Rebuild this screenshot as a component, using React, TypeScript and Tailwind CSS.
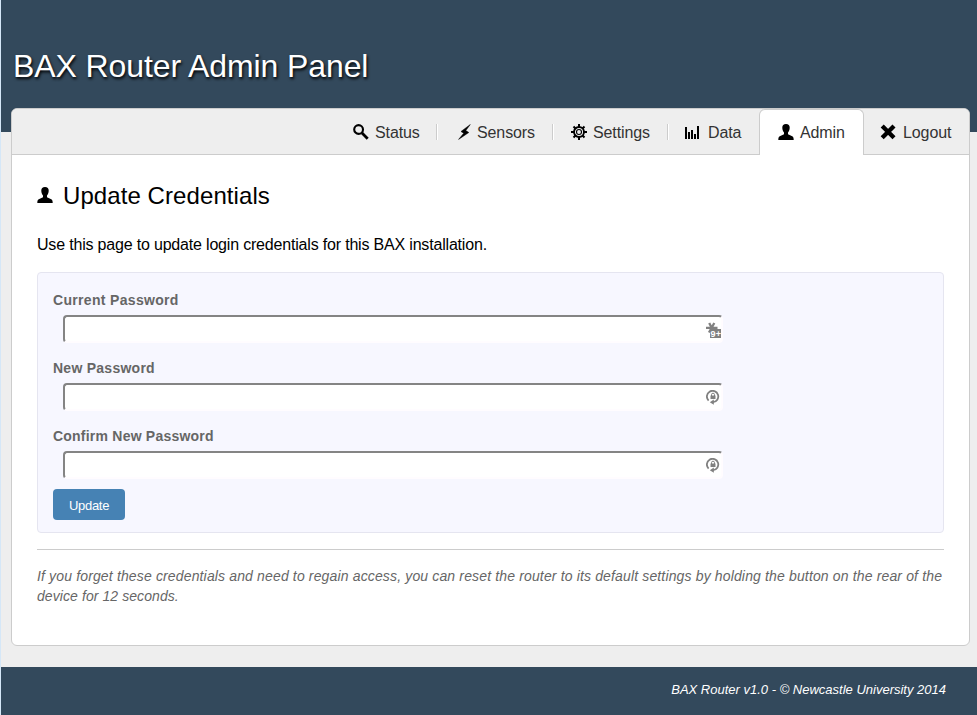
import type { ReactNode } from 'react';

const PersonIcon = () => (
  <svg width="16" height="16" viewBox="0 0 16 16" className="shrink-0">
    <path
      d="M8 0C5.500 0 4.300 1.300 4.300 3.500c0 2.300.6 3.600 1.700 4.900v1.900L2.300 11.900C.8 12.500.3 13.300.3 16h15.400c0-2.700-.5-3.500-2-4.100L10 10.300V8.400c1.100-1.300 1.700-2.600 1.700-4.900C11.700 1.300 10.500 0 8 0z"
      fill="#000"
    />
  </svg>
);

const SearchIcon = () => (
  <svg width="16" height="16" viewBox="0 0 16 16" className="shrink-0">
    <circle cx="5.600" cy="5.500" r="4.400" fill="none" stroke="#000" strokeWidth="2.100" />
    <path d="M9 9l5.700 5.700" stroke="#000" strokeWidth="2.800" />
  </svg>
);

const BoltIcon = () => (
  <svg width="13" height="16" viewBox="0 0 13 16" className="shrink-0">
    <path d="M12.300.5L3 7.500l2.700 1.700L.6 15.400 10.800 8.500 7.800 6.600z" fill="#000" stroke="#000" strokeWidth=".5" />
  </svg>
);

const GearIcon = () => (
  <svg width="16" height="16" viewBox="0 0 16 16" className="shrink-0" fill="none" stroke="#000">
    <path
      d="M8 0v3M8 13v3M0 8h3M13 8h3M2.500 2.500l2 2M11.500 11.500l2 2M13.500 2.500l-2 2M4.500 11.500l-2 2"
      strokeWidth="2"
    />
    <circle cx="8" cy="8" r="5" strokeWidth="1.900" />
    <circle cx="8" cy="8" r="2.500" strokeWidth="1.100" />
  </svg>
);

const BarsIcon = () => (
  <svg width="16" height="16" viewBox="0 0 16 16" className="shrink-0" shapeRendering="crispEdges">
    <path d="M0 3h2v12H0zM3 8h2v7H3zM6 6h2v9H6zM9 10h2v5H9zM12 2h2v13h-2z" fill="#000" />
  </svg>
);

const CrossIcon = () => (
  <svg width="16" height="16" viewBox="0 0 16 16" className="shrink-0">
    <path d="M2.200 2l11.800 11.800M14 2L2.200 13.800" stroke="#000" strokeWidth="4.300" />
  </svg>
);

const VaultIcon = () => (
  <svg width="16" height="17" viewBox="0 0 16 17">
    <path d="M0 5.800h11.500M3.200 1l5 9.500M8.300 1L3 10.500" stroke="#808080" strokeWidth="2.300" />
    <path d="M4 7h11v9H4z" fill="#808080" />
    <text x="4.600" y="14.500" fontSize="9" fontWeight="700" fill="#fff" fontFamily="Liberation Sans, sans-serif" textLength="10.400">
      9+
    </text>
  </svg>
);

const GenerateIcon = () => (
  <svg width="14" height="15" viewBox="0 0 14 15">
    <path d="M2.600 10.600A5.700 5.700 0 1 1 7 12.200" fill="none" stroke="#808080" strokeWidth="1.800" />
    <path d="M3.800 12.200L7.800 9.600v5.200z" fill="#808080" />
    <path d="M4.500 5.500h5v3.500h-5z" fill="#808080" />
    <path d="M5.500 6V4.700a1.500 1.500 0 0 1 3 0V6" fill="none" stroke="#808080" />
  </svg>
);

function NavItem({ icon, label, box, text }: { icon: ReactNode; label: string; box: string; text: string }) {
  return (
    <a className={`flex shrink-0 items-center ${box}`}>
      {icon}
      <span className={`pt-0.5 tracking-[-0.1px] whitespace-nowrap ${text}`}>{label}</span>
    </a>
  );
}

const Separator = () => <i className="h-4 w-0.5 shrink-0 border-r border-l border-r-white border-l-[#ccc]" />;

function PasswordField({ label, spacing, icon }: { label: string; spacing: string; icon: ReactNode }) {
  return (
    <div className="h-[68px]">
      <div className={`h-[25px] text-sm leading-[18px] font-bold text-[#666] ${spacing}`}>{label}</div>
      <div className="relative -mt-px ml-2.5 h-7 w-[660px] rounded border-2 border-t-[#848484] border-r-[#fffcff] border-b-[#fffcff] border-l-[#848484] bg-white">
        <input type="password" className="block h-6 w-[630px] bg-transparent outline-none" />
        {icon}
      </div>
    </div>
  );
}

export default function App() {
  return (
    <div className="flex h-[715px] w-[977px] flex-col overflow-hidden border-l border-[#d5e7f7] bg-[#eee] font-['Liberation_Sans',Arial,sans-serif] text-black">
      <header className="h-[132px] shrink-0 bg-[#33495c] pt-[46px] pl-3">
        <h1 className="text-[32px] leading-10 tracking-[-0.1px] whitespace-nowrap text-white [text-shadow:1px_2px_3px_#000]">
          BAX Router Admin Panel
        </h1>
      </header>

      <main className="relative -mt-6 ml-2.5 h-[538px] w-[959px] shrink-0 rounded-md border border-[#ccc] bg-white">
        <nav className="flex h-[46px] items-center justify-end rounded-t-[5px] border-b border-[#ccc] bg-[#eee] text-base text-[#333]">
          <NavItem icon={<SearchIcon />} label="Status" box="h-[45px] w-[83px]" text="ml-1.5" />
          <Separator />
          <NavItem icon={<BoltIcon />} label="Sensors" box="h-[45px] w-[114px] pl-5" text="ml-1.5" />
          <Separator />
          <NavItem icon={<GearIcon />} label="Settings" box="h-[45px] w-[113px] pl-[17px]" text="ml-1.5" />
          <Separator />
          <NavItem icon={<BarsIcon />} label="Data" box="h-[45px] w-[90px] pl-4" text="ml-[7px]" />
          <NavItem
            icon={<PersonIcon />}
            label="Admin"
            box="-mb-px h-[46px] w-[105px] rounded-t-md border-x border-t border-[#ccc] bg-white pb-[2px] pl-[18px]"
            text="ml-1.5"
          />
          <NavItem icon={<CrossIcon />} label="Logout" box="h-[45px] w-[105px] pl-4" text="ml-[7px]" />
        </nav>

        <section className="px-[25px] pt-[25px]">
          <h2 className="flex h-8 items-center text-2xl">
            <span className="-mt-0.5"><PersonIcon /></span>
            <span className="ml-2.5 tracking-[0.08px]">Update Credentials</span>
          </h2>
          <p className="mt-[21px] h-6 text-base leading-6 tracking-[-0.185px]">
            Use this page to update login credentials for this BAX installation.
          </p>

          <form className="mt-[15px] h-[261px] rounded border border-[#e5e5f0] bg-[#f7f7ff] px-[15px] pt-[18px]">
            <PasswordField
              label="Current Password"
              spacing="tracking-[0.32px]"
              icon={<span className="absolute top-[5px] right-[-1px]"><VaultIcon /></span>}
            />
            <PasswordField
              label="New Password"
              spacing="tracking-[0.26px]"
              icon={<span className="absolute top-[5px] right-[1px]"><GenerateIcon /></span>}
            />
            <PasswordField
              label="Confirm New Password"
              spacing="tracking-[0.22px]"
              icon={<span className="absolute top-[5px] right-[1px]"><GenerateIcon /></span>}
            />
            <button type="button" className="-mt-1.5 block h-[31px] w-[72px] rounded bg-[#4682b4] pt-0.5 text-[13px] leading-none tracking-[-0.3px] text-white">
              Update
            </button>
          </form>

          <hr className="mt-4 border-[#ccc]" />
          <p className="mt-4 text-sm leading-5 text-[#666] italic">
            <span className="block tracking-[0.147px] whitespace-nowrap">
              If you forget these credentials and need to regain access, you can reset the router to its default settings by holding the button on the rear of the
            </span>
            <span className="block tracking-[0.08px]">device for 12 seconds.</span>
          </p>
        </section>
      </main>

      <footer className="mt-[21px] h-12 shrink-0 bg-[#33495c] pt-[13px] pr-[31px] text-right text-[13px] leading-5 text-white italic">
        BAX Router v1.0 - © Newcastle University 2014
      </footer>
    </div>
  );
}
